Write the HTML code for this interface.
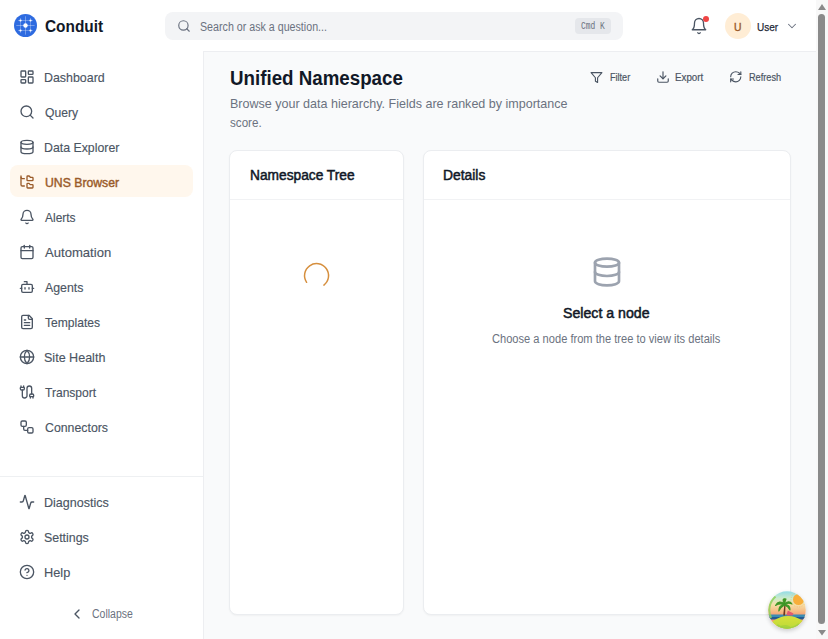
<!DOCTYPE html>
<html><head><meta charset="utf-8">
<style>
*{box-sizing:border-box;margin:0;padding:0}
html,body{width:828px;height:639px;overflow:hidden;background:#fff;font-family:"Liberation Sans",sans-serif}
.abs{position:absolute}
svg.i{position:absolute;fill:none;stroke:currentColor;stroke-width:2;stroke-linecap:round;stroke-linejoin:round}
.t{position:absolute;white-space:nowrap;line-height:1}
#main{position:absolute;left:203px;top:51px;width:613px;height:588px;background:#f9fafb;border-left:1px solid #edeef1;border-top:1px solid #edeef1}
.nav{color:#4b5563}
.navt{position:absolute;left:45px;font-size:13.5px;letter-spacing:-0.45px;color:#4b5563;white-space:nowrap;line-height:1}
.card{position:absolute;background:#fff;border:1px solid #ebedf0;border-radius:8px;box-shadow:0 1px 2px rgba(0,0,0,0.04)}
</style></head><body>

<!-- logo -->
<svg class="abs" style="left:13px;top:13px" width="25" height="25" viewBox="0 0 25 25">
  <circle cx="12.5" cy="12.5" r="11.5" fill="#2e6be0"/>
  <g stroke="#fff" stroke-width="0.8" opacity="0.34">
    <line x1="7.5" y1="5" x2="7.5" y2="19.8"/><line x1="17.5" y1="5" x2="17.5" y2="19.8"/>
    <line x1="5" y1="7.5" x2="19.8" y2="7.5"/><line x1="5" y1="17.5" x2="19.8" y2="17.5"/>
  </g>
  <g stroke="#fff" stroke-width="0.8" opacity="0.42">
    <line x1="12.5" y1="3.3" x2="12.5" y2="21.6"/><line x1="3.3" y1="12.5" x2="21.6" y2="12.5"/>
  </g>
  <circle cx="12.5" cy="12.5" r="2.2" fill="#fff"/>
  <circle cx="7.5" cy="7.5" r="1.1" fill="#fff"/><circle cx="17.5" cy="7.5" r="1.1" fill="#fff"/>
  <circle cx="7.5" cy="17.5" r="1.1" fill="#fff"/><circle cx="17.5" cy="17.5" r="1.1" fill="#fff"/>
</svg>

<!-- search -->
<div class="abs" style="left:165px;top:12px;width:458px;height:27.6px;background:#f3f4f6;border-radius:8px"></div>
<svg class="i" style="left:177px;top:19px;color:#6b7280" width="14" height="14" viewBox="0 0 24 24"><circle cx="11" cy="11" r="8"/><path d="m21 21-4.3-4.3"/></svg>
<div class="abs" style="left:575px;top:18px;width:36px;height:16px;background:#e5e7eb;border-radius:4px"></div>

<!-- bell -->
<svg class="i" style="left:690px;top:16.5px;color:#4b5563;stroke-width:1.75" width="18" height="18" viewBox="0 0 24 24"><path d="M6 8a6 6 0 0 1 12 0c0 7 3 9 3 9H3s3-2 3-9"/><path d="M10.3 21a1.94 1.94 0 0 0 3.4 0"/></svg>
<div class="abs" style="left:702.8px;top:16px;width:6.4px;height:6.4px;border-radius:50%;background:#ef4444"></div>
<!-- avatar -->
<div class="abs" style="left:725px;top:12.5px;width:26px;height:26px;border-radius:50%;background:#ffedd5"></div>
<svg class="i" style="left:785px;top:18.5px;color:#6b7280;stroke-width:1.8" width="14" height="14" viewBox="0 0 24 24"><path d="m6 9 6 6 6-6"/></svg>

<!-- main -->
<div id="main"></div>

<!-- sidebar -->
<div class="abs" style="left:0;top:476px;width:203px;height:1px;background:#eef0f2"></div>
<div class="abs" style="left:10px;top:165px;width:183px;height:32px;background:#fff7ed;border-radius:8px"></div>

<svg class="i nav" style="left:19px;top:69px" width="16" height="16" viewBox="0 0 24 24"><rect width="7" height="9" x="3" y="3" rx="1"/><rect width="7" height="5" x="14" y="3" rx="1"/><rect width="7" height="9" x="14" y="12" rx="1"/><rect width="7" height="5" x="3" y="16" rx="1"/></svg>

<svg class="i nav" style="left:19px;top:104px" width="16" height="16" viewBox="0 0 24 24"><circle cx="11" cy="11" r="8"/><path d="m21 21-4.3-4.3"/></svg>

<svg class="i nav" style="left:19px;top:139px" width="16" height="16" viewBox="0 0 24 24"><ellipse cx="12" cy="5" rx="9" ry="3"/><path d="M3 5V19A9 3 0 0 0 21 19V5"/><path d="M3 12A9 3 0 0 0 21 12"/></svg>

<svg class="i" style="left:19px;top:174px;color:#9a5b2a" width="16" height="16" viewBox="0 0 24 24"><path d="M20 10a1 1 0 0 0 1-1V6a1 1 0 0 0-1-1h-2.5a1 1 0 0 1-.8-.4l-.9-1.2A1 1 0 0 0 15 3h-2a1 1 0 0 0-1 1v5a1 1 0 0 0 1 1Z"/><path d="M20 21a1 1 0 0 0 1-1v-3a1 1 0 0 0-1-1h-2.9a1 1 0 0 1-.88-.55l-.42-.85a1 1 0 0 0-.92-.6H13a1 1 0 0 0-1 1v5a1 1 0 0 0 1 1Z"/><path d="M3 5a2 2 0 0 0 2 2h3"/><path d="M3 3v13a2 2 0 0 0 2 2h3"/></svg>

<svg class="i nav" style="left:19px;top:209px" width="16" height="16" viewBox="0 0 24 24"><path d="M10.268 21a2 2 0 0 0 3.464 0"/><path d="M3.262 15.326A1 1 0 0 0 4 17h16a1 1 0 0 0 .74-1.673C19.41 13.956 18 12.499 18 8A6 6 0 0 0 6 8c0 4.499-1.411 5.956-2.738 7.326"/></svg>

<svg class="i nav" style="left:19px;top:244px" width="16" height="16" viewBox="0 0 24 24"><path d="M8 2v4"/><path d="M16 2v4"/><rect width="18" height="18" x="3" y="4" rx="2"/><path d="M3 10h18"/></svg>

<svg class="i nav" style="left:19px;top:279px" width="16" height="16" viewBox="0 0 24 24"><path d="M12 8V4H8"/><rect width="16" height="12" x="4" y="8" rx="2"/><path d="M2 14h2"/><path d="M20 14h2"/><path d="M15 13v2"/><path d="M9 13v2"/></svg>

<svg class="i nav" style="left:19px;top:314px" width="16" height="16" viewBox="0 0 24 24"><path d="M15 2H6a2 2 0 0 0-2 2v16a2 2 0 0 0 2 2h12a2 2 0 0 0 2-2V7Z"/><path d="M14 2v4a2 2 0 0 0 2 2h4"/><path d="M10 9H8"/><path d="M16 13H8"/><path d="M16 17H8"/></svg>

<svg class="i nav" style="left:19px;top:349px" width="16" height="16" viewBox="0 0 24 24"><circle cx="12" cy="12" r="10"/><path d="M12 2a14.5 14.5 0 0 0 0 20 14.5 14.5 0 0 0 0-20"/><path d="M2 12h20"/></svg>

<svg class="i nav" style="left:19px;top:384px" width="16" height="16" viewBox="0 0 24 24"><path d="M17 21v-2a1 1 0 0 1-1-1v-1a2 2 0 0 1 2-2h2a2 2 0 0 1 2 2v1a1 1 0 0 1-1 1"/><path d="M19 15V6.5a1 1 0 0 0-7 0v11a1 1 0 0 1-7 0V9"/><path d="M21 21v-2h-4"/><path d="M3 5h4V3"/><path d="M7 5a1 1 0 0 1 1 1v1a2 2 0 0 1-2 2H4a2 2 0 0 1-2-2V6a1 1 0 0 1 1-1V3"/></svg>

<svg class="i nav" style="left:19px;top:419px" width="16" height="16" viewBox="0 0 24 24"><rect width="8" height="8" x="3" y="3" rx="2"/><path d="M7 11v4a2 2 0 0 0 2 2h4"/><rect width="8" height="8" x="13" y="13" rx="2"/></svg>

<svg class="i nav" style="left:19px;top:494px" width="16" height="16" viewBox="0 0 24 24"><path d="M22 12h-2.48a2 2 0 0 0-1.93 1.460l-2.35 8.36a.25.25 0 0 1-.48 0L9.24 2.18a.25.25 0 0 0-.48 0l-2.35 8.36A2 2 0 0 1 4.49 12H2"/></svg>

<svg class="i nav" style="left:19px;top:529px" width="16" height="16" viewBox="0 0 24 24"><path d="M12.22 2h-.44a2 2 0 0 0-2 2v.18a2 2 0 0 1-1 1.73l-.43.25a2 2 0 0 1-2 0l-.15-.08a2 2 0 0 0-2.73.73l-.22.38a2 2 0 0 0 .73 2.73l.15.1a2 2 0 0 1 1 1.72v.51a2 2 0 0 1-1 1.74l-.15.09a2 2 0 0 0-.73 2.730l.22.38a2 2 0 0 0 2.73.73l.15-.08a2 2 0 0 1 2 0l.43.25a2 2 0 0 1 1 1.73V20a2 2 0 0 0 2 2h.44a2 2 0 0 0 2-2v-.18a2 2 0 0 1 1-1.73l.43-.25a2 2 0 0 1 2 0l.15.08a2 2 0 0 0 2.73-.73l.22-.39a2 2 0 0 0-.73-2.73l-.15-.08a2 2 0 0 1-1-1.74v-.5a2 2 0 0 1 1-1.74l.15-.09a2 2 0 0 0 .73-2.73l-.22-.38a2 2 0 0 0-2.73-.73l-.15.08a2 2 0 0 1-2 0l-.43-.25a2 2 0 0 1-1-1.73V4a2 2 0 0 0-2-2z"/><circle cx="12" cy="12" r="3"/></svg>

<svg class="i nav" style="left:19px;top:564px" width="16" height="16" viewBox="0 0 24 24"><circle cx="12" cy="12" r="10"/><path d="M9.09 9a3 3 0 0 1 5.83 1c0 2-3 3-3 3"/><path d="M12 17h.01"/></svg>

<svg class="i" style="left:69.2px;top:605.6px;color:#4b5563" width="16" height="16" viewBox="0 0 24 24"><path d="m15 18-6-6 6-6"/></svg>

<!-- page header -->

<svg class="i" style="left:589.7px;top:70.9px;color:#4b5563;stroke-width:2.1" width="13" height="13" viewBox="0 0 24 24"><polygon points="22 3 2 3 10 12.46 10 19 14 21 14 12.46 22 3"/></svg>
<svg class="i" style="left:656px;top:70.4px;color:#4b5563" width="14" height="14" viewBox="0 0 24 24"><path d="M21 15v4a2 2 0 0 1-2 2H5a2 2 0 0 1-2-2v-4"/><polyline points="7 10 12 15 17 10"/><line x1="12" x2="12" y1="15" y2="3"/></svg>
<svg class="i" style="left:729.3px;top:70.3px;color:#4b5563" width="13.5" height="13.5" viewBox="0 0 24 24"><path d="M3 12a9 9 0 0 1 9-9 9.75 9.75 0 0 1 6.740 2.74L21 8"/><path d="M21 3v5h-5"/><path d="M21 12a9 9 0 0 1-9 9 9.75 9.75 0 0 1-6.74-2.74L3 16"/><path d="M8 16H3v5"/></svg>

<!-- cards -->
<div class="card" style="left:229px;top:150px;width:175px;height:464.6px"></div>
<div class="abs" style="left:230px;top:199px;width:173px;height:1px;background:#f1f2f4"></div>
<svg class="abs" style="left:300px;top:259px" width="33" height="33" viewBox="0 0 33 33"><path d="M6.6 23.3 A12 12 0 1 1 23.9 26.1" fill="none" stroke="#d68f3e" stroke-width="1.5" stroke-linecap="round"/></svg>

<div class="card" style="left:423px;top:150px;width:368px;height:464.6px"></div>
<div class="abs" style="left:424px;top:199px;width:366px;height:1px;background:#f1f2f4"></div>
<svg class="i" style="left:590.5px;top:256.3px;color:#9ca3af" width="32" height="32" viewBox="0 0 24 24"><ellipse cx="12" cy="5" rx="9" ry="3"/><path d="M3 5V19A9 3 0 0 0 21 19V5"/><path d="M3 12A9 3 0 0 0 21 12"/></svg>

<!-- island avatar -->
<div class="abs" style="left:768px;top:591px;width:38px;height:38px;border-radius:50%;box-shadow:0 2px 4px rgba(0,0,0,0.18)"></div>
<svg class="abs" style="left:768px;top:591px" width="38" height="38" viewBox="0 0 38 38">
  <defs>
    <clipPath id="cc"><circle cx="19" cy="19" r="18.8"/></clipPath>
    <linearGradient id="sky" x1="0" y1="0" x2="0" y2="1">
      <stop offset="0" stop-color="#92dbe6"/>
      <stop offset="0.2" stop-color="#cdeccb"/>
      <stop offset="0.36" stop-color="#f6dea6"/>
      <stop offset="0.52" stop-color="#f6bf86"/>
      <stop offset="0.66" stop-color="#f39a72"/>
    </linearGradient>
    <linearGradient id="hill" x1="0" y1="0" x2="0" y2="1">
      <stop offset="0" stop-color="#d8e13a"/>
      <stop offset="0.5" stop-color="#b7d83a"/>
      <stop offset="1" stop-color="#8cc63a"/>
    </linearGradient>
  </defs>
  <g clip-path="url(#cc)">
    <rect width="38" height="38" fill="url(#sky)"/>
    <circle cx="30.5" cy="8.5" r="5.5" fill="#f8ae3a"/>
    <circle cx="30.5" cy="8.5" r="7.5" fill="none" stroke="#f6b45a" stroke-width="0.8" stroke-dasharray="1 1.5" opacity="0.7"/>
    <rect x="0" y="23.5" width="38" height="4" fill="#3a8db3"/>
    <rect x="0" y="26" width="38" height="2.5" fill="#245a92"/>
    <ellipse cx="20" cy="40" rx="20" ry="15" fill="url(#hill)"/>
    <ellipse cx="17" cy="37" rx="6" ry="3" fill="#9ccf3a" opacity="0.6"/>
    <path d="M15.2 24.5 L16.4 13 L17.6 13.2 L17 24.5Z" fill="#6e3b1c"/>
    <g fill="#3e9626" stroke="#3e9626" stroke-width="1.1" stroke-linejoin="round">
      <path d="M16.5 13 Q11 8.5 7.5 14.5 Q12 12 16.5 13.8Z"/>
      <path d="M16.5 13 Q13 7 18 8 Q16.8 10.5 17 13Z"/>
      <path d="M16.5 13 Q21 8.5 24 13 Q20 11.2 16.8 13.8Z"/>
      <path d="M16.2 13.2 Q10.5 14.5 10.8 20 Q13 15.8 16.5 14Z"/>
      <path d="M16.8 13.2 Q22.5 14 22 19 Q20 15.2 16.5 14Z"/>
    </g>
    <path d="M18.5 24.5 L19.8 19.5 L25.5 22.5 L24.5 24.5Z" fill="#e25a6e"/>
    <path d="M3 27 A18 18 0 0 1 7.5 5.5" fill="none" stroke="#8fd05a" stroke-width="2.2" opacity="0.85"/>
    <path d="M9 34 A18 18 0 0 0 31 33" fill="none" stroke="#9ad04a" stroke-width="2" opacity="0.8"/>
  </g>
</svg>

<!-- scrollbar -->
<div class="abs" style="left:816px;top:0;width:12px;height:639px;background:#f8f8f8"></div>
<div class="abs" style="left:818px;top:14px;width:7px;height:610px;background:#8a8a8a;border-radius:4px"></div>
<svg class="abs" style="left:816px;top:0" width="12" height="639" viewBox="0 0 12 639"><path d="M2 10 L6 4 L10 10Z" fill="#8a8a8a"/><path d="M2 630 L6 635.5 L10 630Z" fill="#8a8a8a"/></svg>

<div id="conduit" class="t" style="left:45.20px;top:19px;font-size:16px;font-weight:700;color:#111827;transform:scaleX(0.9623);transform-origin:0 0;">Conduit</div>
<div id="search" class="t" style="left:200.06px;top:21px;font-size:12px;font-weight:400;color:#6b7280;transform:scaleX(0.8894);transform-origin:0 0;">Search or ask a question...</div>
<div id="cmdk" class="t" style="left:580.82px;top:22px;font-size:10px;font-weight:400;color:#6b7280;font-family:'Liberation Mono',monospace;transform:scaleX(0.7933);transform-origin:0 0;">Cmd K</div>
<div id="avU" class="t" style="left:733.62px;top:22px;font-size:11.5px;font-weight:400;color:#9a5b2a;-webkit-text-stroke:0.4px #9a5b2a;transform:scaleX(0.9000);transform-origin:0 0;">U</div>
<div id="user" class="t" style="left:756.81px;top:22px;font-size:11.5px;font-weight:400;color:#1f2937;-webkit-text-stroke:0.25px #1f2937;transform:scaleX(0.8720);transform-origin:0 0;">User</div>
<div id="nav_Dashboard" class="t" style="left:44.47px;top:71px;font-size:13.5px;font-weight:400;color:#4b5563;-webkit-text-stroke:0.15px #4b5563;transform:scaleX(0.9185);transform-origin:0 0;">Dashboard</div>
<div id="nav_Query" class="t" style="left:45.38px;top:106px;font-size:13.5px;font-weight:400;color:#4b5563;-webkit-text-stroke:0.15px #4b5563;transform:scaleX(0.8973);transform-origin:0 0;">Query</div>
<div id="nav_DataExplorer" class="t" style="left:44.47px;top:141px;font-size:13.5px;font-weight:400;color:#4b5563;-webkit-text-stroke:0.15px #4b5563;transform:scaleX(0.9134);transform-origin:0 0;">Data Explorer</div>
<div id="nav_Alerts" class="t" style="left:45.38px;top:211px;font-size:13.5px;font-weight:400;color:#4b5563;-webkit-text-stroke:0.15px #4b5563;transform:scaleX(0.8857);transform-origin:0 0;">Alerts</div>
<div id="nav_Automation" class="t" style="left:45.39px;top:246px;font-size:13.5px;font-weight:400;color:#4b5563;-webkit-text-stroke:0.15px #4b5563;transform:scaleX(0.9691);transform-origin:0 0;">Automation</div>
<div id="nav_Agents" class="t" style="left:45.38px;top:281px;font-size:13.5px;font-weight:400;color:#4b5563;-webkit-text-stroke:0.15px #4b5563;transform:scaleX(0.9143);transform-origin:0 0;">Agents</div>
<div id="nav_Templates" class="t" style="left:45.38px;top:316px;font-size:13.5px;font-weight:400;color:#4b5563;-webkit-text-stroke:0.15px #4b5563;transform:scaleX(0.8952);transform-origin:0 0;">Templates</div>
<div id="nav_SiteHealth" class="t" style="left:44.46px;top:351px;font-size:13.5px;font-weight:400;color:#4b5563;-webkit-text-stroke:0.15px #4b5563;transform:scaleX(0.9292);transform-origin:0 0;">Site Health</div>
<div id="nav_Transport" class="t" style="left:45.38px;top:386px;font-size:13.5px;font-weight:400;color:#4b5563;-webkit-text-stroke:0.15px #4b5563;transform:scaleX(0.8931);transform-origin:0 0;">Transport</div>
<div id="nav_Connectors" class="t" style="left:45.38px;top:421px;font-size:13.5px;font-weight:400;color:#4b5563;-webkit-text-stroke:0.15px #4b5563;transform:scaleX(0.9130);transform-origin:0 0;">Connectors</div>
<div id="nav_UNS" class="t" style="left:45.38px;top:176px;font-size:13.5px;font-weight:400;color:#9a5b2a;-webkit-text-stroke:0.45px #9a5b2a;transform:scaleX(0.9060);transform-origin:0 0;">UNS Browser</div>
<div id="nav_Diagnostics" class="t" style="left:44.46px;top:496px;font-size:13.5px;font-weight:400;color:#4b5563;-webkit-text-stroke:0.15px #4b5563;transform:scaleX(0.9290);transform-origin:0 0;">Diagnostics</div>
<div id="nav_Settings" class="t" style="left:44.47px;top:531px;font-size:13.5px;font-weight:400;color:#4b5563;-webkit-text-stroke:0.15px #4b5563;transform:scaleX(0.9187);transform-origin:0 0;">Settings</div>
<div id="nav_Help" class="t" style="left:44.44px;top:566px;font-size:13.5px;font-weight:400;color:#4b5563;-webkit-text-stroke:0.15px #4b5563;transform:scaleX(0.9444);transform-origin:0 0;">Help</div>
<div id="collapse" class="t" style="left:91.81px;top:608px;font-size:12px;font-weight:400;color:#6b7280;transform:scaleX(0.8745);transform-origin:0 0;">Collapse</div>
<div id="title" class="t" style="left:229.84px;top:68px;font-size:20px;font-weight:700;color:#111827;transform:scaleX(0.9370);transform-origin:0 0;">Unified Namespace</div>
<div id="sub1" class="t" style="left:229.80px;top:97px;font-size:13px;font-weight:400;color:#6b7280;transform:scaleX(0.9637);transform-origin:0 0;">Browse your data hierarchy. Fields are ranked by importance</div>
<div id="sub2" class="t" style="left:229.81px;top:116px;font-size:13px;font-weight:400;color:#6b7280;transform:scaleX(0.8943);transform-origin:0 0;">score.</div>
<div id="filter" class="t" style="left:609.62px;top:73px;font-size:10px;font-weight:400;color:#4b5563;-webkit-text-stroke:0.2px #4b5563;transform:scaleX(0.9087);transform-origin:0 0;">Filter</div>
<div id="export" class="t" style="left:675.41px;top:73px;font-size:10px;font-weight:400;color:#4b5563;-webkit-text-stroke:0.2px #4b5563;transform:scaleX(0.9793);transform-origin:0 0;">Export</div>
<div id="refresh" class="t" style="left:748.81px;top:73px;font-size:10px;font-weight:400;color:#4b5563;-webkit-text-stroke:0.2px #4b5563;transform:scaleX(0.9171);transform-origin:0 0;">Refresh</div>
<div id="nstree" class="t" style="left:250.20px;top:168px;font-size:14px;font-weight:400;color:#111827;-webkit-text-stroke:0.5px #111827;transform:scaleX(0.9813);transform-origin:0 0;">Namespace Tree</div>
<div id="details" class="t" style="left:443.40px;top:168px;font-size:14px;font-weight:400;color:#111827;-webkit-text-stroke:0.5px #111827;transform:scaleX(0.9884);transform-origin:0 0;">Details</div>
<div id="select" class="t" style="left:563.40px;top:306px;font-size:14px;font-weight:400;color:#111827;-webkit-text-stroke:0.5px #111827;transform:scaleX(1.0105);transform-origin:0 0;">Select a node</div>
<div id="choose" class="t" style="left:492.39px;top:333px;font-size:12px;font-weight:400;color:#6b7280;transform:scaleX(0.9251);transform-origin:0 0;">Choose a node from the tree to view its details</div>
</body></html>
